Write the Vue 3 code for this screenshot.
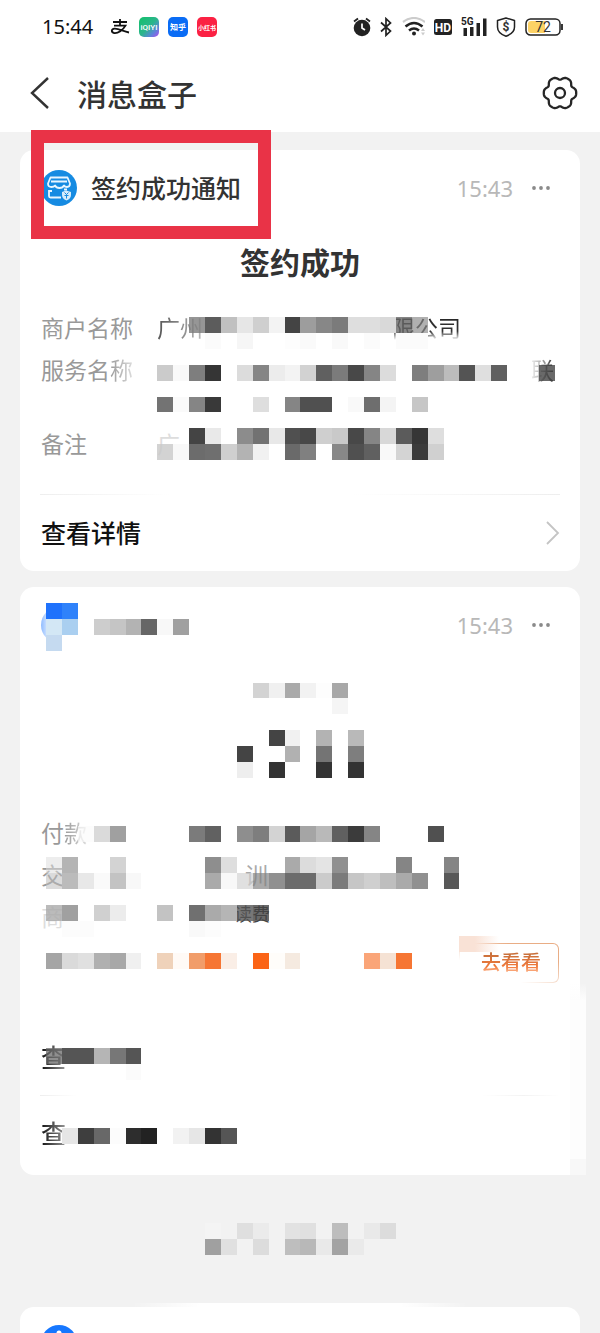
<script setup>
const PITCH = 15.9
const at = (n) => Math.round(n * PITCH)

// Each strip: [row, first column, colours]; a dash leaves the cell clear.
function cells(left, top, strips) {
  return strips.flatMap(([row, col, colours]) =>
    colours.split(' ').map((c, i) => ({
      x: left + at(col + i),
      y: top + at(row),
      w: at(col + i + 1) - at(col + i),
      h: at(row + 1) - at(row),
      fill: '#' + c,
      hidden: c === '-'
    })).filter((c) => !c.hidden)
  )
}

const signMask = cells(26, 167, [
  [0, 11, 'c0c0c0 e6e6e6 cfcfcf f3f3f3 444 9d9d9d 878787 7b7b7b dedede dedede d9d9d9'],
  [0, 9, '7c7c7ccc 505050ee'],
  [0, 22, '666c 888a'],
  [1, 10, 'fbfbfb - f6f6f6 - - fdfdfd fafafa - f9f9f9 - fbfbfb - fbfbfb fbfbfb'],
  [3, 7, 'cbcbcb f9f9f9 7e7e7e 353535 - dcdcdc 858585 ececec f3f3f3 d2d2d2 606060 7b7b7b 484848 858585 dcdcdc - 7e7e7e 9e9e9e bcbcbc 545454 dfdfdf 606060'],
  [3, 31, '444c'],
  [5, 7, '737373 fafafa 858585 393939 - - dedede - 858585 505050 505050 - f9f9f9 6e6e6e f4f4f4 - c6c6c6'],
  [7, 9, '444 e9e9e9 - 8c8c8c 727272 e8e8e8 505050 484848 cfcfcf c9c9c9 484848 858585 d8d8d8 5b5b5b 363636 dedede'],
  [8, 7, 'c8c8c8cc f8f8f8 6c6c6c 6f6f6f cfcfcf b3b3b3 f1f1f1 fff 6a6a6a 808080 fff 888 505050 606060 f9f9f9 d4d4d4 3b3b3b d0d0d0']
])

const payMask = cells(26, 16, [
  [0, 0, '1f72fc 2f82fa'],
  [1, 0, 'd3e7f5 aacff0 - cdcdcd c5c5c5 b3b3b3 666 f8f8f8 a0a0a0'],
  [2, 0, 'c5daf0'],
  [5, 13, 'd3d3d3 f0f0f0 aaa f2f2f2 fdfdfd a8a8a8'],
  [6, 18, 'f5f5f5'],
  [8, 14, '444 f1f1f1 - b3b3b3 - b9b9b9'],
  [9, 12, '444 - - b1b1b1 - 747474 - 7e7e7e'],
  [10, 12, 'eee - 333 - - 333 - 333'],
  [14, 2, 'fafafaaa dadada a0a0a0'],
  [14, 9, '7b7b7b 616161 - 8e8e8e 7e7e7e d3d3d3 5b5b5b a5a5a5 b9b9b9 606060 3b3b3b 858585'],
  [14, 24, '505050'],
  [16, 0, 'ddd8 b4b4b4 - - d3d3d3'],
  [16, 10, '8e8e8e dedede - - - aaa dcdcdc e4e4e4 909090 - - - 858585 - - 858585'],
  [17, 0, 'bbb8 bbb e8e8e8 fafafa c3c3c3 f8f8f8'],
  [17, 10, 'aaa f8f8f8 d0d0d0aa 808080aa 909090 6c6c6c 6c6c6c cbcbcb 7b7b7b c6c6c6 cfcfcf bebebe aaa 909090 - 585858'],
  [19, 0, 'aaac a0a0a0 - d0d0d0 ececec - - c3c3c3 - 707070 aaa b5b5b5 555c 444c'],
  [20, 1, 'fcfcfc fcfcfc'],
  [20, 9, 'f9f9f9 fcfcfc'],
  [22, 0, 'a5a5a5 dadada e0e0e0 b0b0b0 a8a8a8 f0f0f0 - efd2ba fffaf6 f19d6a f67634 faeee6 - fb6416 fffdfa f5eae0'],
  [22, 20, 'faa578 f5e2d4 f67634'],
  [28, 0, '666b 555 555 b5b5b5 777 555'],
  [29, 5, 'fbfbfb'],
  [33, 1, 'e6e6e6 3e3e3e 686868 fcfcfc 2d2d2d 222 - f2f2f2 e6e6e6 333 555']
])

const dateMask = cells(0, 0, [
  [0, 0, 'f4f4f4 - dfdfdf ebebeb - e2e2e2 e0e0e0 - bdbdbd - e9e9e9 dcdcdc'],
  [1, 0, 'a0a0a0 e0e0e0 - dcdcdc - bebebe b8b8b8 e9e9e9 a3a3a3 eaeaea']
])

const gear = Array.from({ length: 120 }, (_, i) => {
  const t = (i / 120) * Math.PI * 2
  const r = 16.2 - 2.9 * ((1 - Math.cos(6 * t)) / 2) ** 2
  return `${(18 + r * Math.cos(t)).toFixed(2)},${(18 + r * Math.sin(t)).toFixed(2)}`
}).join(' ')
</script>

<template>
  <div class="page">
    <header class="top">
      <div class="status">
        <span class="clock">15:44</span>
        <svg class="pay" width="20" height="16" viewBox="0 0 20 16" fill="none" stroke="#111" stroke-width="1.8">
          <path d="M3 3h14M10 0v6M4 6.600h11.500C13 11 8 14.500 4.200 14 1 13.500 1 10 4.500 9.700 9 9.400 13 12.500 19 13.500" />
        </svg>
        <svg class="app" width="20" height="20" viewBox="0 0 20 20">
          <defs>
            <linearGradient id="iq" x1="0" y1="0" x2="1" y2="1">
              <stop offset="0" stop-color="#12c06a" /><stop offset=".5" stop-color="#2bb58c" />
              <stop offset=".75" stop-color="#5a86d8" /><stop offset="1" stop-color="#b04af0" />
            </linearGradient>
          </defs>
          <rect width="20" height="20" rx="5" fill="url(#iq)" />
          <text x="10" y="13" text-anchor="middle" font-size="8" font-weight="500" fill="#fff" class="narrow">iQIYI</text>
        </svg>
        <svg class="app" width="20" height="20" viewBox="0 0 20 20">
          <rect width="20" height="20" rx="5" fill="#0a6cf5" />
          <text x="10" y="13" text-anchor="middle" font-size="8" font-weight="700" fill="#fff">知乎</text>
        </svg>
        <svg class="app" width="20" height="20" viewBox="0 0 20 20">
          <rect width="20" height="20" rx="5" fill="#fb2143" />
          <text x="10" y="12.500" text-anchor="middle" font-size="6" font-weight="700" fill="#fff">小红书</text>
        </svg>

        <div class="indicators">
          <svg width="18" height="20" viewBox="0 0 18 20">
            <circle cx="9" cy="11" r="8.300" fill="#222" />
            <path d="M1 4.500 5 1.500M17 4.500 13 1.500" stroke="#222" stroke-width="1.800" />
            <path d="M9 6.500V11l3 2" fill="none" stroke="#fff" stroke-width="1.700" />
          </svg>
          <svg width="12" height="20" viewBox="0 0 12 20" fill="none" stroke="#222" stroke-width="1.700">
            <path d="M1 5.500 10.500 14 6 18.300V1.700L10.500 6 1 14.500" />
          </svg>
          <svg width="24" height="20" viewBox="0 0 24 20" fill="none">
            <path d="M2 5Q13-3 24 5" stroke="#ccc" stroke-width="2.200" />
            <path d="M4.500 9.500Q13 2.500 21.500 9.500M8 13.500Q13 9.500 18 13.500" stroke="#222" stroke-width="2.500" />
            <circle cx="13" cy="16.500" r="2" fill="#222" />
            <path d="m20 14 2-3 2 3zM20 15.500l2 3 2-3z" fill="#ccc" />
          </svg>
          <svg width="18" height="16" viewBox="0 0 18 16">
            <rect width="18" height="16" rx="2.500" fill="#222" />
            <text x="9" y="12.500" text-anchor="middle" font-size="12" font-weight="700" fill="#fff" class="narrow">HD</text>
          </svg>
          <svg width="26" height="20" viewBox="0 0 26 20">
            <text x="0" y="8" font-size="10" font-weight="700" fill="#222" class="narrow">5G</text>
            <path d="M2.500 11h3.500v8H2.500zM9 10h3.500v9H9zM15.500 6H19v13h-3.500zM22 1.500h3.500V19H22z" fill="#222" />
          </svg>
          <svg width="20" height="20" viewBox="0 0 20 20">
            <path d="M10 1 18.500 3.500V10c0 4.500-3.500 7.500-8.500 9.200C5 17.500 1.500 14.500 1.500 10V3.500z" fill="none" stroke="#222" stroke-width="1.500" stroke-linejoin="round" />
            <text x="10" y="14" text-anchor="middle" font-size="12" font-weight="700" fill="#333" class="narrow">$</text>
          </svg>
          <svg width="38" height="18" viewBox="0 0 38 18">
            <rect x="1" y="1" width="34" height="16" rx="4.500" fill="#fff" stroke="#222" stroke-width="1.500" />
            <path d="M6 3h14v12H6a3 3 0 0 1-3-3V6a3 3 0 0 1 3-3z" fill="#fcd266" />
            <path d="M37 6v6" stroke="#222" stroke-width="1.800" />
            <text x="18" y="14" text-anchor="middle" font-size="14" fill="#333" class="narrow">72</text>
          </svg>
        </div>
      </div>

      <nav class="nav">
        <button class="icon-btn" aria-label="返回">
          <svg width="20" height="32" viewBox="0 0 20 32" fill="none" stroke="#333" stroke-width="2.400"><path d="M18 1 2 16 18 31" /></svg>
        </button>
        <h1>消息盒子</h1>
        <button class="icon-btn gear" aria-label="设置">
          <svg width="36" height="36" viewBox="0 0 36 36" fill="none" stroke="#262626" stroke-width="2.300">
            <polygon :points="gear" /><circle cx="18" cy="18" r="5" />
          </svg>
        </button>
      </nav>
    </header>

    <main>
      <article class="card">
        <div class="head">
          <svg width="36" height="36" viewBox="0 0 36 36" fill="none" stroke="#e8f5ff" stroke-width="1.800" stroke-linejoin="round">
            <circle cx="18" cy="18" r="18" fill="#168be2" stroke="none" />
            <path d="M9.500 7.500h17l2.500 6q0 3.500-3 3.500-2.200 0-3-1.500-1.200 2.500-4.500 2.500t-4.500-2.500Q13 17 10.500 17 7 17 7 13.500zM10 11.500h16M8 20v6q0 1.500 1.500 1.500H20M8 21h3M23 19.500h3" />
            <path d="m25 20.500 5 1.500v3q0 3.500-4.500 5.500Q21 28.500 21 25v-3z" fill="#d6ecfb" stroke="none" />
            <path d="m23.500 22.500 2 2 2-2M25.500 24.500v4M23.500 25.500h4" stroke="#168be2" stroke-width="1" />
          </svg>
          <h2>签约成功通知</h2>
          <time>15:43</time>
          <button class="icon-btn" aria-label="更多">
            <svg width="20" height="8" viewBox="0 0 20 8" fill="#8a8a8a"><circle cx="3" cy="4" r="1.900" /><circle cx="10" cy="4" r="1.900" /><circle cx="17" cy="4" r="1.900" /></svg>
          </button>
        </div>
        <h3>签约成功</h3>
        <dl>
          <div class="row">
            <dt>商户名称</dt>
            <dd><span class="fade-long">广州</span><span class="tail">限公司</span></dd>
          </div>
          <div class="row tall">
            <dt>服务名<span class="fade">称</span></dt>
            <dd><span class="end">联</span></dd>
          </div>
          <div class="row"><dt>备注</dt><dd><span class="ghost">广</span></dd></div>
        </dl>
        <a class="link rule" href="#detail">
          <span>查看详情</span>
          <svg width="14" height="24" viewBox="0 0 14 24" fill="none" stroke="#c4c4c4" stroke-width="1.800"><path d="m1 1 11 11L1 23" /></svg>
        </a>
        <svg class="mask" aria-hidden="true" shape-rendering="crispEdges">
          <rect v-for="(c, i) in signMask" :key="i" :x="c.x" :y="c.y" :width="c.w" :height="c.h" :fill="c.fill" />
        </svg>
        <div class="marker"></div>
      </article>

      <article class="card payment">
        <div class="head">
          <span class="avatar"></span>
          <time>15:43</time>
          <button class="icon-btn" aria-label="更多">
            <svg width="20" height="8" viewBox="0 0 20 8" fill="#8a8a8a"><circle cx="3" cy="4" r="1.900" /><circle cx="10" cy="4" r="1.900" /><circle cx="17" cy="4" r="1.900" /></svg>
          </button>
        </div>
        <div class="amount"></div>
        <dl>
          <div class="row"><dt>付<span class="fade">款</span></dt><dd></dd></div>
          <div class="row"><dt>交</dt><dd><span class="inset">训</span></dd></div>
          <div class="row"><dt class="ghost">商</dt><dd><span class="fee">读费</span></dd></div>
        </dl>
        <div class="reward"><button class="go"><span>去看看</span></button></div>
        <a class="link" href="#bill"><span class="char">查</span></a>
        <a class="link faint" href="#more"><span class="char">查</span></a>
        <div class="spill"></div>
        <svg class="mask" aria-hidden="true" shape-rendering="crispEdges">
          <rect v-for="(c, i) in payMask" :key="i" :x="c.x" :y="c.y" :width="c.w" :height="c.h" :fill="c.fill" />
        </svg>
      </article>

      <svg class="date" width="191" height="32" viewBox="0 0 191 32" aria-hidden="true" shape-rendering="crispEdges">
        <rect v-for="(c, i) in dateMask" :key="i" :x="c.x" :y="c.y" :width="c.w" :height="c.h" :fill="c.fill" />
      </svg>

      <article class="card next">
        <svg width="36" height="8" viewBox="0 0 36 8"><circle cx="18" cy="18" r="18" fill="#1677ff" /><circle cx="18" cy="8" r="2.500" fill="#fff" /></svg>
      </article>
    </main>
  </div>
</template>

<style>
body { margin: 0; background: #f2f2f2; }
</style>

<style scoped>
.page {
  min-height: 100vh;
  display: flex;
  flex-direction: column;
  overflow: hidden;
  background: #f2f2f2;
  color: #333;
  font-family: "Noto Sans", "Noto Sans CJK SC", sans-serif;
}
.page * { box-sizing: border-box; }
svg { display: block; flex: none; }
h1, h2, h3, dl, dd { margin: 0; }
.narrow { font-family: Roboto, "Liberation Sans", sans-serif; }
.top { background: #fff; }
.status {
  height: 54px;
  display: flex;
  align-items: center;
  padding: 0 37px 0 42px;
}
.clock { font-size: 20px; line-height: 24px; color: #111; }
.pay { margin-left: 17px; }
.app { margin-left: 9px; }
.indicators { margin-left: auto; display: flex; align-items: center; gap: 9px; }
.nav {
  height: 78px;
  display: flex;
  align-items: center;
  padding: 0 22px 0 30px;
}
.icon-btn { padding: 0; border: 0; background: none; cursor: pointer; }
h1 { margin-left: 27px; padding-top: 4px; font-size: 30px; line-height: 40px; font-weight: 500; }
.gear { margin-left: auto; }
main { flex: 1; display: flex; flex-direction: column; padding: 18px 20px 0; }
.card {
  position: relative;
  background: #fff;
  border-radius: 14px;
  padding: 0 20px;
}
.head { height: 76px; display: flex; align-items: center; padding: 0 9px 0 1px; }
h2 { margin-left: 14px; font-size: 25px; line-height: 36px; font-weight: 500; }
time { margin-left: auto; margin-right: 18px; font-size: 22px; line-height: 30px; color: #b8b8b8; }
h3 { height: 74px; font-size: 30px; line-height: 74px; text-align: center; font-weight: 700; }
dl { display: grid; gap: 10px; margin-top: 12px; font-size: 23px; line-height: 32px; }
.row { display: flex; height: 32px; padding-left: 1px; }
.tall { height: 64px; }
dt { width: 116px; color: #999; }
dd { flex: 1; display: flex; }
.fade, .fade-long, .tail, .end, .char {
  color: transparent;
  background-clip: text;
  -webkit-background-clip: text;
}
.fade { background-image: linear-gradient(90deg, #999, #ddd); }
.fade-long { background-image: linear-gradient(90deg, #555, #bbb); }
.tail { margin-left: 189px; background-image: linear-gradient(#222, #333 60%, #eee 85%); }
.end { margin-left: auto; margin-right: 6px; background-image: linear-gradient(90deg, #eee, #aaa 50%, #222); }
.ghost { color: #ddd; }
.inset { margin-left: 88px; color: #aaa; }
.fee { margin-left: 77px; color: #444; font-size: 18px; line-height: 26px; }
.link {
  height: 76px;
  display: flex;
  align-items: center;
  justify-content: space-between;
  padding-left: 1px;
  color: #111;
  font-size: 25px;
  line-height: 36px;
  font-weight: 500;
  text-decoration: none;
}
.rule {
  margin-top: 34px;
  height: 77px;
  background: linear-gradient(90deg, #eee, #fff 25%, #fff 60%, #eee) top / 100% 1px no-repeat;
}
.faint { background: linear-gradient(90deg, #eee, #fff 7%, #fff 85%, #f3f3f3 93%, #fff) top / 100% 1px no-repeat; }
.char { background-image: linear-gradient(90deg, #111, #999); }
.mask {
  position: absolute;
  left: 0;
  top: 0;
  width: 100%;
  height: 100%;
  pointer-events: none;
}
.marker {
  position: absolute;
  left: 11px;
  top: -20px;
  width: 240px;
  height: 109px;
  border: 13px solid #e93347;
  pointer-events: none;
}
.payment { margin-top: 16px; padding-bottom: 4px; border-bottom-right-radius: 0; }
.avatar {
  width: 36px;
  height: 36px;
  border-radius: 18px;
  background: linear-gradient(90deg, #8fbcff, #fff 30%);
}
.amount { height: 142px; }
.reward { height: 86px; padding-top: 10px; display: flex; justify-content: flex-end; }
.go {
  width: 100px;
  height: 40px;
  margin-right: 1px;
  padding: 0 0 0 4px;
  border: 1px solid transparent;
  border-radius: 6px;
  background: linear-gradient(#fff, #fff) padding-box, linear-gradient(20deg, #fff 30%, #e9ad85 75%) border-box;
  font: 500 20px/38px "Noto Sans", "Noto Sans CJK SC", sans-serif;
  position: relative;
}
.go span {
  color: transparent;
  background: linear-gradient(#c9713c 20%, #f0793a 65%, #ffc09c 90%);
  background-clip: text;
  -webkit-background-clip: text;
}
.go::before {
  content: "";
  position: absolute;
  left: -1px;
  top: -8px;
  width: 40px;
  height: 16px;
  background: linear-gradient(90deg, #f9e2d6 40%, #fff0);
}
.spill {
  position: absolute;
  right: -6px;
  bottom: 16px;
  width: 16px;
  height: 176px;
  background: linear-gradient(#fff0, #fdfdfd 10%);
}
.spill::after {
  content: "";
  position: absolute;
  left: 0;
  top: 176px;
  width: 16px;
  height: 16px;
  background: #f8f8f8;
}
.date { align-self: center; margin-top: 48px; }
.next { flex: 1; margin-top: 52px; padding: 18px 21px 0; border-radius: 14px 14px 0 0; }
.next::before {
  content: "";
  position: absolute;
  left: 20%;
  right: 20%;
  top: -4px;
  height: 4px;
  background: linear-gradient(90deg, #fff0, #fff 20%, #fff 80%, #fff0);
}
</style>
